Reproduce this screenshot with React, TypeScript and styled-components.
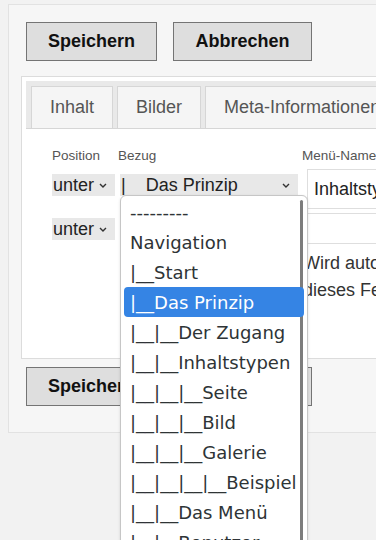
import styled, { createGlobalStyle } from 'styled-components';

const GlobalStyle = createGlobalStyle`
  html, body {
    margin: 0;
    padding: 0;
    background: #f2f2f2;
    font-family: "Liberation Sans", Arial, sans-serif;
  }
`

const Page = styled.div`
  width: 100vw;
  height: 100vh;
  overflow: hidden;
  padding-top: 4px;
  box-sizing: border-box;
`

const Panel = styled.div`
  margin-left: 8px;
  width: 700px;
  padding: 17px 0 26px 12px;
  background: #f6f6f6;
  border: 1px solid #e2e2e2;
`

const ButtonRow = styled.div`
  display: flex;
  gap: 16px;
  padding-left: 5px;
`

const Button = styled.button<{ width: number }>`
  width: ${props => props.width}px;
  height: 39px;
  padding: 0;
  background: #dedede;
  border: 1px solid #747474;
  font-family: "Liberation Sans", Arial, sans-serif;
  font-weight: bold;
  font-size: 18px;
  color: #111;
`

const Box = styled.div`
  margin: 15px 0 8px;
  background: #fff;
  border: 1px solid #dcdcdc;
`

const TabBar = styled.div`
  display: flex;
  gap: 4px;
  margin: 4px 4px 0;
  padding: 5px 5px 0;
  background: #e9e9e9;
  border-bottom: 1px solid #d6d6d6;
`

const Tab = styled.div`
  height: 41px;
  padding: 0 18px;
  display: flex;
  align-items: center;
  background: #f5f5f5;
  border: 1px solid #d6d6d6;
  border-bottom: none;
  font-size: 18px;
  color: #555;
  white-space: nowrap;
`

const Form = styled.div`
  display: grid;
  grid-template-columns: 66px 184px 300px;
  row-gap: 4px;
  padding: 18px 0 54px 30px;
`

const Label = styled.div`
  font-size: 13.5px;
  line-height: 18px;
  color: #555;
  white-space: nowrap;
`

const Cell = styled.div`
  position: relative;
`

const SelectBox = styled.div<{ width: number; offset?: number }>`
  width: ${props => props.width}px;
  margin: 5px 0 0 ${props => props.offset || 0}px;
  height: 22px;
  box-sizing: border-box;
  padding: 0 8px 0 1px;
  display: flex;
  align-items: center;
  justify-content: space-between;
  background: #e8e8e8;
  font-size: 18px;
  color: #222;
  white-space: pre;
`

const TextInput = styled.div<{ height: number }>`
  height: ${props => props.height}px;
  box-sizing: border-box;
  margin-left: 5px;
  padding: 0 6px;
  display: flex;
  align-items: center;
  border: 1px solid #dedede;
  font-size: 18px;
  color: #222;
`

const HelpText = styled.div`
  margin: 2px 0 0 1px;
  font-size: 18px;
  line-height: 27px;
  color: #333;
  white-space: nowrap;
`

const Popup = styled.div`
  position: absolute;
  top: 26px;
  left: 2px;
  z-index: 5;
  width: 188px;
  height: 380px;
  box-sizing: border-box;
  padding-top: 1px;
  background: #fff;
  border: 1px solid #c6c6c6;
  border-radius: 6px 6px 0 0;
  overflow: hidden;
  box-shadow: 0 1px 3px rgba(0, 0, 0, 0.12);
`

const Scrollbar = styled.div`
  position: absolute;
  top: 4px;
  right: 4px;
  bottom: 0;
  width: 3px;
  border-radius: 2px;
  background: #7c7c7c;
`

const Option = styled.div<{ active?: boolean }>`
  position: relative;
  z-index: 1;
  height: 30px;
  margin: 0 3px;
  padding-left: 6px;
  display: flex;
  align-items: center;
  border-radius: 4px;
  font-family: "DejaVu Sans", sans-serif;
  font-size: 18px;
  white-space: pre;
  color: ${props => (props.active ? '#fff' : '#2e3436')};
  background: ${props => (props.active ? '#3584e4' : 'transparent')};
`

const Chevron = () => (
  <svg width="8" height="5" viewBox="0 0 8 5">
    <path d="M1 1l3 3 3-3" fill="none" stroke="#333" strokeWidth="1.4" />
  </svg>
)

const options = [
  '---------',
  'Navigation',
  '|__Start',
  '|__Das Prinzip',
  '|__|__Der Zugang',
  '|__|__Inhaltstypen',
  '|__|__|__Seite',
  '|__|__|__Bild',
  '|__|__|__Galerie',
  '|__|__|__|__Beispiel',
  '|__|__Das Menü',
  '|__|__Benutzer',
]

const App = () => {
  return (
    <Page>
      <GlobalStyle />
      <Panel>
        <ButtonRow>
          <Button width={131}>Speichern</Button>
          <Button width={139}>Abbrechen</Button>
        </ButtonRow>

        <Box>
          <TabBar>
            <Tab>Inhalt</Tab>
            <Tab>Bilder</Tab>
            <Tab>Meta-Informationen</Tab>
          </TabBar>

          <Form>
            <Label>Position</Label>
            <Label>Bezug</Label>
            <Label>Menü-Name</Label>

            <Cell>
              <SelectBox width={63}>unter <Chevron /></SelectBox>
            </Cell>
            <Cell>
              <SelectBox width={178} offset={2}>|    Das Prinzip <Chevron /></SelectBox>
              <Popup>
                <Scrollbar />
                {options.map((option, i) => (
                  <Option key={i} active={i === 3}>{option}</Option>
                ))}
              </Popup>
            </Cell>
            <Cell>
              <TextInput height={40}>Inhaltstypen</TextInput>
            </Cell>

            <Cell>
              <SelectBox width={63}>unter <Chevron /></SelectBox>
            </Cell>
            <Cell />
            <Cell>
              <TextInput height={31} />
            </Cell>

            <div />
            <div />
            <HelpText>
              Wird automatisch gesetzt, wenn<br />
              dieses Feld leer bleibt.
            </HelpText>
          </Form>
        </Box>

        <ButtonRow>
          <Button width={131}>Speichern</Button>
          <Button width={139}>Abbrechen</Button>
        </ButtonRow>
      </Panel>
    </Page>
  )
}

export default App;
